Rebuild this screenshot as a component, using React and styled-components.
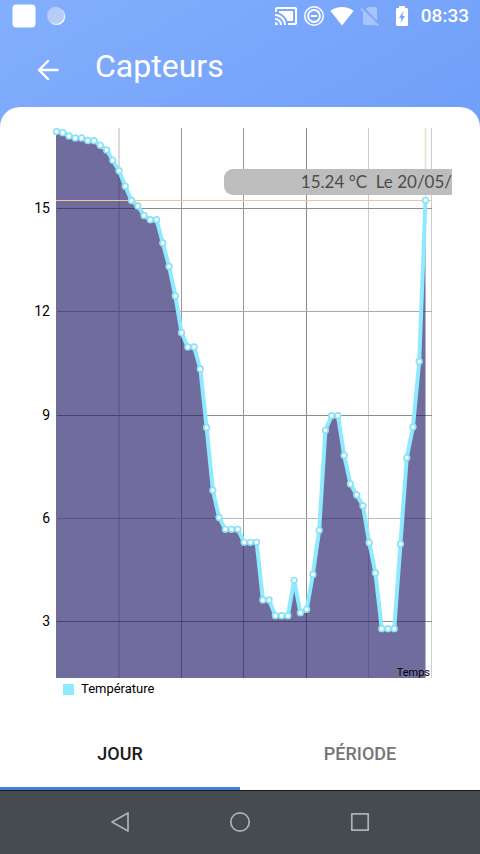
import React from "react";
import styled, { createGlobalStyle } from "styled-components";

const GlobalStyle = createGlobalStyle`
  *, *::before, *::after { box-sizing: border-box; }
  body { margin: 0; font-family: Roboto, "Liberation Sans", sans-serif; background: #454c4f; }
  button { font: inherit; border: 0; padding: 0; background: none; cursor: pointer; }
`;

const Screen = styled.div`
  min-height: 100vh;
  display: flex;
  flex-direction: column;
  background: linear-gradient(150deg, #84affe 0, #709ff8 340px);
`;

const StatusBar = styled.div`
  height: 32px;
  padding: 0 11px 0 12px;
  display: flex;
  align-items: center;
  justify-content: space-between;
  color: #fff;
`;

const StatusGroup = styled.div`
  display: flex;
  align-items: center;
  gap: ${(p) => p.$gap}px;
`;

const StatusIcon = styled.svg`
  display: block;
  width: 24px;
  height: 24px;
  flex: none;
`;

const BatteryIcon = styled(StatusIcon)`
  margin-left: 4px;
`;

const Clock = styled.time`
  font-size: 19px;
  line-height: 24px;
  font-weight: 500;
  margin-left: 3px;
`;

const Toolbar = styled.header`
  height: 75px;
  padding: 0 36px;
  display: flex;
  align-items: flex-start;
  gap: 35px;
`;

const BackButton = styled.button`
  width: 24px;
  height: 24px;
  margin-top: 26px;
  svg { display: block; }
`;

const Title = styled.h1`
  margin: 14px 0 0;
  font-size: 32px;
  line-height: 40px;
  font-weight: 400;
  color: #fff;
`;

const Sheet = styled.main`
  flex: 1;
  display: flex;
  flex-direction: column;
  padding-top: 21px;
  border-radius: 20px 20px 0 0;
  background: #fefefe;
`;

const ChartCard = styled.section`
  flex: 1;
  padding: 0 28px;
`;

const Plot = styled.div`
  position: relative;
`;

const ChartSvg = styled.svg`
  display: block;
  width: 100%;
  height: auto;
  font-size: 14px;
`;

const Marker = styled.div`
  position: absolute;
  top: 41px;
  right: 0;
  width: 228px;
  height: 26px;
  text-align: right;
  white-space: pre;
  border-radius: 9px 0 0 9px;
  background: #bdbdbd;
  color: #4c4c4c;
  font-family: Lato, sans-serif;
  font-size: 17px;
  line-height: 26px;
`;

const Legend = styled.div`
  display: flex;
  align-items: center;
  gap: 7px;
  padding-left: 35px;
  font-size: 13px;
  line-height: 22px;
  color: #000;
`;

const Swatch = styled.span`
  width: 11px;
  height: 11px;
  background: #8eeafe;
`;

const Tabs = styled.div`
  display: flex;
  height: 74px;
`;

const Tab = styled.button`
  flex: 1;
  padding-top: 4px;
  border-bottom: 3px solid ${(p) => (p.$active ? "#4580d8" : "transparent")};
  color: ${(p) => (p.$active ? "#1b1b1b" : "#757575")};
  font-size: 18px;
  line-height: 24px;
  font-weight: 500;
`;

const NavBar = styled.nav`
  height: 64px;
  padding: 0 60px 2px;
  display: flex;
  border-top: 1px solid #151a1c;
  background: #454c4f;
`;

const NavButton = styled.button`
  flex: 1;
  display: flex;
  align-items: center;
  justify-content: center;
`;

const STEP = 6.254;
const X0 = 28.5;
const TOP = 128;
const LEVELS = [
  131.5, 132.7, 136, 138, 138, 140.5, 140.7, 145.3, 150, 160.3, 170.7, 186.3,
  200.5, 206, 215.5, 219.7, 219.7, 243, 266.5, 296, 332.7, 347, 347, 369, 427.5,
  490.3, 517.5, 529.3, 529.3, 529.3, 542.3, 542.3, 542.3, 600, 600, 615.7,
  615.7, 615.7, 580.3, 612.7, 609.3, 574.5, 530.3, 430.3, 415.7, 415.7, 455.5,
  484, 495, 505.8, 542.7, 573, 628.7, 628.7, 628.7, 544, 457.8, 427, 361.5,
  200.3,
];
const POINTS = LEVELS.map((y, i) => [X0 + i * STEP, y - TOP]);
const LINE = POINTS.map((p) => p.join(",")).join(" ");
const LAST_X = POINTS[POINTS.length - 1][0];

const COLUMNS = [
  { x: 28.5, color: "#999" },
  { x: 91, color: "#dadada", width: 2 },
  { x: 153.5, color: "#999" },
  { x: 215.5, color: "#999" },
  { x: 278.5, color: "#8c8c8c" },
  { x: 340.5, color: "#ccc" },
  { x: 403.5, color: "#ccc" },
];
const ROWS = [
  { label: "15", y: 80.5, color: "#8c8c8c" },
  { label: "12", y: 183.5, color: "#aaa" },
  { label: "9", y: 287.5, color: "#8c8c8c" },
  { label: "6", y: 390.5, color: "#bbb" },
  { label: "3", y: 493.5, color: "#8c8c8c" },
];

function TemperatureChart() {
  return (
    <ChartSvg viewBox="0 0 424 550" role="img" aria-label="Température">
      {COLUMNS.map((c) => (
        <line key={c.x} x1={c.x} x2={c.x} y1="0" y2="550" stroke={c.color} strokeWidth={c.width || 1} />
      ))}
      {ROWS.map((r) => (
        <g key={r.label}>
          <line x1="28" x2="404" y1={r.y} y2={r.y} stroke={r.color} />
          <text x="22" y={r.y + 4.5} textAnchor="end" fill="#000">{r.label}</text>
        </g>
      ))}
      <polygon points={`${X0},550 ${LINE} ${LAST_X},550`} fill="rgba(31, 27, 103, 0.64)" />
      <polyline points={LINE} fill="none" stroke="#8eeafe" strokeWidth="4" />
      <line x1="28" x2="404" y1="72.5" y2="72.5" stroke="#f3c78a" />
      <line x1={LAST_X} x2={LAST_X} y1="0" y2="72" stroke="#f0e8d6" strokeWidth="2" />
      {POINTS.map(([x, y]) => (
        <circle key={x} cx={x} cy={y} r="2.8" fill="#fff" stroke="#8ae2f4" strokeWidth="1.7" />
      ))}
      <text x="402" y="548" textAnchor="end" fontSize="11" fill="#000">Temps</text>
    </ChartSvg>
  );
}

export default function App() {
  return (
    <>
      <GlobalStyle />
      <Screen>
        <StatusBar>
          <StatusGroup $gap={8}>
            <StatusIcon viewBox="0 0 24 24">
              <rect x="0.5" y="0.5" width="23" height="23" rx="4" fill="#fff" />
            </StatusIcon>
            <StatusIcon viewBox="0 0 24 24">
              <circle cx="12.6" cy="12.4" r="8.6" fill="#fff" />
              <circle cx="11.6" cy="11.4" r="8.4" fill="#b5cdf8" stroke="#a9c6fb" strokeWidth="1" strokeDasharray="1 1" />
            </StatusIcon>
          </StatusGroup>
          <StatusGroup $gap={4}>
            <StatusIcon viewBox="0 0 24 24" fill="currentColor">
              <path d="M1 18v3h3c0-1.660-1.340-3-3-3zm0-4v2c2.760 0 5 2.240 5 5h2c0-3.870-3.130-7-7-7zm18-7H5v1.630c3.960 1.280 7.090 4.410 8.370 8.370H19V7zM1 10v2c4.970 0 9 4.030 9 9h2c0-6.080-4.930-11-11-11zm20-7H3c-1.100 0-2 .9-2 2v3h2V5h18v14h-7v2h7c1.100 0 2-.9 2-2V5c0-1.100-.9-2-2-2z" />
            </StatusIcon>
            <StatusIcon viewBox="0 0 24 24" fill="none" stroke="currentColor">
              <circle cx="12" cy="12" r="9.300" strokeWidth="1.500" />
              <circle cx="12" cy="12" r="5.900" strokeWidth="2" />
              <path d="M9 12h6" strokeWidth="2" />
            </StatusIcon>
            <StatusIcon viewBox="0 0 24 24" fill="currentColor">
              <path d="M12 21.500 23.500 6.900C23 6.500 18.900 3 12 3S1 6.500.500 6.900L12 21.500z" />
            </StatusIcon>
            <StatusIcon viewBox="0 0 24 24" fill="currentColor" opacity="0.35">
              <path d="M19 5c0-1.100-.9-2-2-2h-7L7.700 5.300 19 16.700V5zM3.700 3.900 2.400 5.200 5 7.800V19c0 1.100.9 2 2 2h10c.4 0 .700-.100 1-.300l1.900 1.900 1.200-1.300L3.700 3.900z" />
            </StatusIcon>
            <BatteryIcon viewBox="0 0 24 24" fill="currentColor">
              <path fillRule="evenodd" d="M16.700 4H15V2H9v2H7.300C6.600 4 6 4.600 6 5.300v15.300C6 21.400 6.600 22 7.300 22h9.300c.7 0 1.400-.6 1.400-1.300V5.300C18 4.600 17.400 4 16.700 4zM10.500 19l1-5H9l4.500-7-1 5H15l-4.500 7z" />
            </BatteryIcon>
            <Clock>08:33</Clock>
          </StatusGroup>
        </StatusBar>
        <Toolbar>
          <BackButton aria-label="Retour">
            <svg width="24" height="24" viewBox="0 0 24 24" fill="none" stroke="#fff" strokeWidth="2.400" strokeLinecap="round" strokeLinejoin="round">
              <path d="M21.500 12H3M12 3 3 12l9 9" />
            </svg>
          </BackButton>
          <Title>Capteurs</Title>
        </Toolbar>
        <Sheet>
          <ChartCard>
            <Plot>
              <TemperatureChart />
              <Marker>{"15.24 °C  Le 20/05/"}</Marker>
            </Plot>
            <Legend>
              <Swatch />
              Température
            </Legend>
          </ChartCard>
          <Tabs role="tablist">
            <Tab role="tab" aria-selected="true" $active>JOUR</Tab>
            <Tab role="tab" aria-selected="false">PÉRIODE</Tab>
          </Tabs>
        </Sheet>
        <NavBar>
          <NavButton aria-label="Précédent">
            <svg width="24" height="24" viewBox="0 0 24 24" fill="none" stroke="#adb2b3" strokeWidth="1.700" strokeLinejoin="round">
              <path d="M20 3v18L4 12z" />
            </svg>
          </NavButton>
          <NavButton aria-label="Accueil">
            <svg width="24" height="24" viewBox="0 0 24 24" fill="none" stroke="#adb2b3" strokeWidth="1.700">
              <circle cx="12" cy="12" r="9.200" />
            </svg>
          </NavButton>
          <NavButton aria-label="Applications récentes">
            <svg width="24" height="24" viewBox="0 0 24 24" fill="none" stroke="#adb2b3" strokeWidth="1.700" strokeLinejoin="round">
              <rect x="3.800" y="3.800" width="16.400" height="16.400" />
            </svg>
          </NavButton>
        </NavBar>
      </Screen>
    </>
  );
}
